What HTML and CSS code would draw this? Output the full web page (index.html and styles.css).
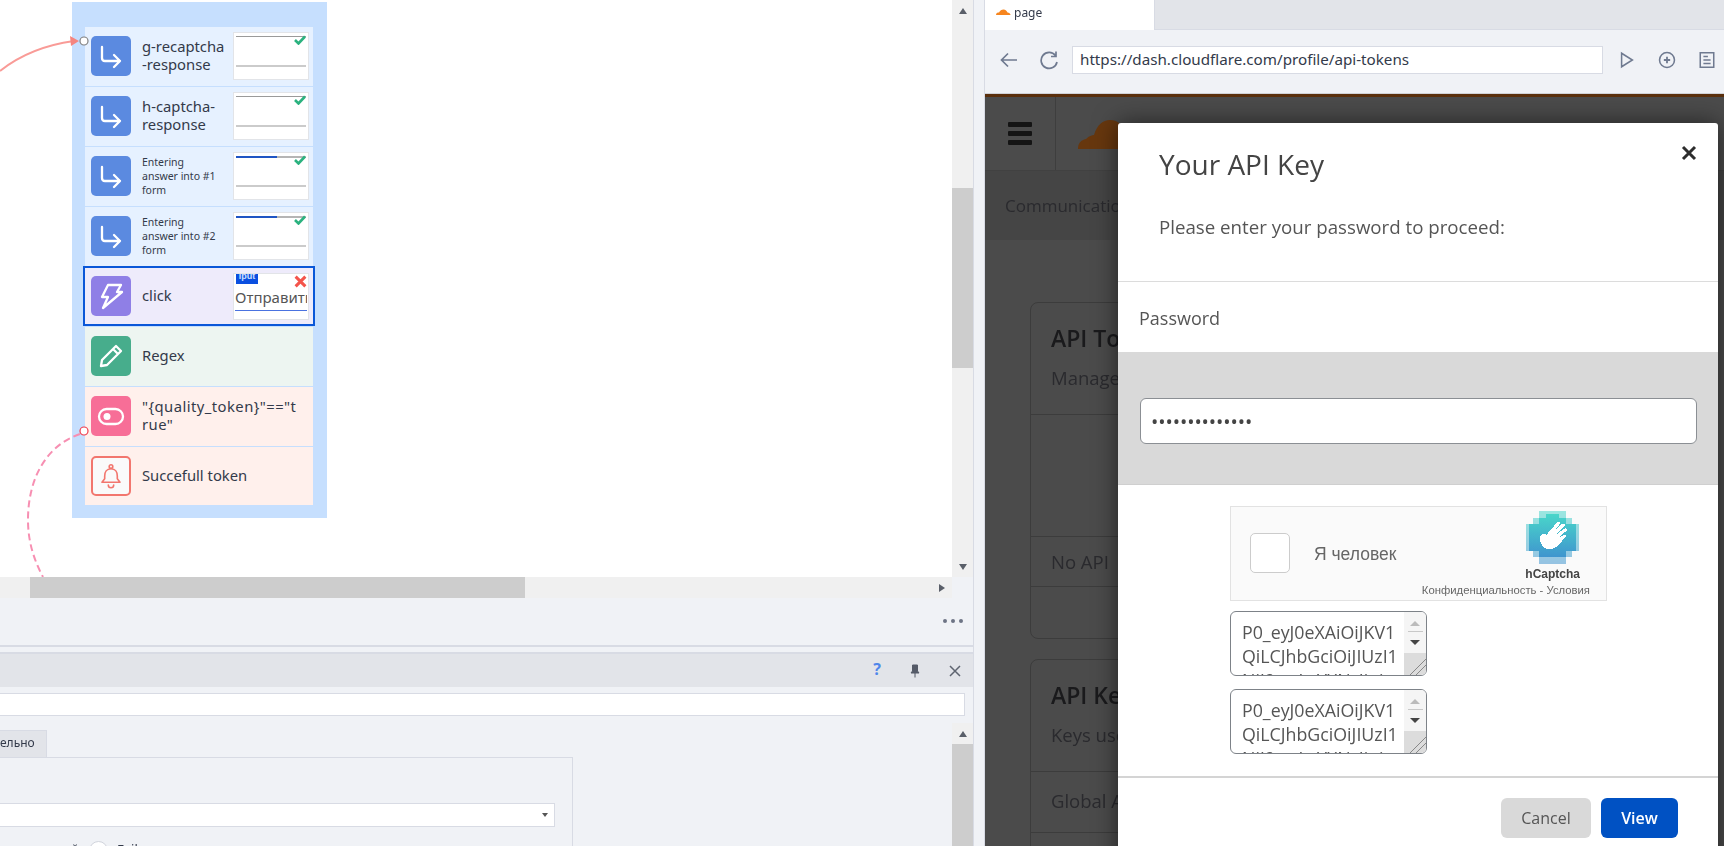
FILE: index.html
```html
<!DOCTYPE html>
<html lang="en">
<head>
<meta charset="utf-8">
<title>Workflow designer</title>
<link rel="stylesheet" href="styles.css">
</head>
<body>
<div class="app">
  <section class="left">
    <div class="designer">
      <div class="canvas-row">
        <div class="canvas">
          <svg class="wires" width="952" height="577" viewBox="0 0 952 577">
            <path class="wire" d="M0 71 C 20 55, 45 45, 74 41"/>
            <path class="wire-head" d="M70 36 L79 41 L71 46 Z"/>
            <path class="wire-dash" d="M80 434 C 45 446, 28 480, 28 520 C 28 542, 34 560, 43 577"/>
            <circle class="port" cx="84" cy="41" r="4"/>
            <circle class="port port-red" cx="84" cy="431" r="4"/>
          </svg>
          <div class="group">
            <div class="node node-blue">
              <span class="ico ico-blue"><svg viewBox="0 0 40 40"><path d="M11 11 V22 Q11 25 14 25 H29 M23 19 L29 25 L23 31"/></svg></span>
              <span class="label">g-recaptcha<br>-response</span>
              <span class="thumb"><i class="t-top"></i><i class="t-low"></i><svg class="t-mark" viewBox="0 0 12 10"><path d="M1 5 L4.5 8.5 L11 1.5"/></svg></span>
            </div>
            <div class="node node-blue">
              <span class="ico ico-blue"><svg viewBox="0 0 40 40"><path d="M11 11 V22 Q11 25 14 25 H29 M23 19 L29 25 L23 31"/></svg></span>
              <span class="label">h-captcha-<br>response</span>
              <span class="thumb"><i class="t-top"></i><i class="t-low"></i><svg class="t-mark" viewBox="0 0 12 10"><path d="M1 5 L4.5 8.5 L11 1.5"/></svg></span>
            </div>
            <div class="node node-blue">
              <span class="ico ico-blue"><svg viewBox="0 0 40 40"><path d="M11 11 V22 Q11 25 14 25 H29 M23 19 L29 25 L23 31"/></svg></span>
              <span class="label label-sm">Entering<br>answer into #1<br>form</span>
              <span class="thumb"><i class="t-top t-progress"></i><i class="t-low"></i><svg class="t-mark" viewBox="0 0 12 10"><path d="M1 5 L4.5 8.5 L11 1.5"/></svg></span>
            </div>
            <div class="node node-blue">
              <span class="ico ico-blue"><svg viewBox="0 0 40 40"><path d="M11 11 V22 Q11 25 14 25 H29 M23 19 L29 25 L23 31"/></svg></span>
              <span class="label label-sm">Entering<br>answer into #2<br>form</span>
              <span class="thumb"><i class="t-top t-progress"></i><i class="t-low"></i><svg class="t-mark" viewBox="0 0 12 10"><path d="M1 5 L4.5 8.5 L11 1.5"/></svg></span>
            </div>
            <div class="node node-purple node-selected">
              <span class="ico ico-purple"><svg viewBox="0 0 40 40"><path d="M17 9 H30 L26 16 H31 L12 32 L17 21 H11 Z"/></svg></span>
              <span class="label">click</span>
              <span class="thumb thumb-click"><b class="t-tag">iput</b><em class="t-btn">Отправить</em><svg class="t-x" viewBox="0 0 12 12"><path d="M1.5 1.5 L10.5 10.5 M10.5 1.5 L1.5 10.5"/></svg></span>
            </div>
            <div class="node node-green">
              <span class="ico ico-green"><svg viewBox="0 0 40 40"><path d="M10 30 L11 24 L25 10 L30 15 L16 29 Z M22 13 L27 18"/></svg></span>
              <span class="label">Regex</span>
            </div>
            <div class="node node-salmon">
              <span class="ico ico-pink"><svg viewBox="0 0 40 40"><rect x="8" y="13" width="24" height="15" rx="7.5"/><circle class="solid" cx="16" cy="20.5" r="3.5"/></svg></span>
              <span class="label label-wide">"{quality_token}"=="t<br>rue"</span>
            </div>
            <div class="node node-salmon node-last">
              <span class="ico ico-bell"><svg viewBox="0 0 40 40"><circle cx="20" cy="9.500" r="2"/><path d="M20 12 c-5 0 -7 4 -7 8 v3 l-3 4 h20 l-3 -4 v-3 c0 -4 -2 -8 -7 -8 z M17 30 a3 3 0 0 0 6 0"/></svg></span>
              <span class="label">Succefull token</span>
            </div>
          </div>
        </div>
        <div class="vscroll">
          <span class="arrow arrow-up"></span>
          <span class="vthumb vthumb-a"></span>
          <span class="vfill"></span>
          <span class="arrow arrow-down"></span>
        </div>
      </div>
      <div class="hscroll-row">
        <div class="hscroll"><span class="hthumb"></span><span class="vfill"></span><span class="arrow arrow-right"></span></div>
      </div>
      <div class="more"><i></i><i></i><i></i></div>
    </div>
    <div class="props">
      <div class="props-head">
        <span class="help">?</span>
        <svg class="pin" viewBox="0 0 12 14"><path d="M3.500 1 H8.500 V7 L10 9 H2 L3.500 7 Z M6 9 V13.500"/></svg>
        <svg class="close-sm" viewBox="0 0 12 12"><path d="M1 1 L11 11 M11 1 L1 11"/></svg>
      </div>
      <div class="props-search"><span class="field"></span></div>
      <div class="props-body">
        <div class="props-main">
          <div class="tab">ельно</div>
          <div class="box">
            <div class="select"><span class="caret"></span></div>
            <div class="radio-row"><span class="r-text">й</span><span class="radio"></span><span class="r-text">Fail</span></div>
          </div>
        </div>
        <div class="vscroll vscroll-low">
          <span class="arrow arrow-up"></span>
          <span class="vfill vfill-thumb"></span>
        </div>
      </div>
    </div>
  </section>
  <div class="splitter"></div>
  <section class="right">
    <div class="tabs">
      <div class="browser-tab">
        <svg class="cf-mini" viewBox="0 0 32 14"><path d="M2 13 C2 9 5 8 8 8 C10 4 13 2 17 2 C21 2 24 5 25 8 C28 8 31 10 31 13 Z"/></svg>
        <span>page</span>
      </div>
    </div>
    <div class="toolbar">
      <svg class="tool tool-back" viewBox="0 0 20 20"><path d="M18 10 H3 M9 3.500 L2.500 10 L9 16.500"/></svg>
      <svg class="tool tool-reload" viewBox="0 0 20 20"><path d="M16.500 5.500 A8 8 0 1 0 18 12 M17 1.500 V6.500 H12"/></svg>
      <div class="url">https://dash.cloudflare.com/profile/api-tokens</div>
      <svg class="tool tool-play" viewBox="0 0 20 20"><path d="M4 2.500 L16 10 L4 17.500 Z"/></svg>
      <svg class="tool tool-add" viewBox="0 0 20 20"><circle cx="10" cy="10" r="8.300"/><path class="thick" d="M6.500 10 H13.500 M10 6.500 V13.500"/></svg>
      <svg class="tool tool-doc" viewBox="0 0 20 20"><path d="M2.500 2 H17.500 V18 H2.500 Z M6 6 H11 M6 10 H14 M6 14 H14"/></svg>
    </div>
    <div class="page">
      <div class="page-head">
        <div class="burger"><i></i><i></i><i></i></div>
        <svg class="cf-logo" viewBox="0 0 46 30"><path d="M1 30 C1 24 4 21 9 20 C12 17 15 16 17 16 C20 6 26 1 33 1 C40 1 46 5 46 12 V30 Z"/></svg>
      </div>
      <div class="page-band">Communication</div>
      <div class="cards">
        <div class="card">
          <div class="card-head"><h2>API Tokens</h2><p>Manage</p></div>
          <div class="card-empty"></div>
          <div class="card-row">No API</div>
          <div class="card-foot"></div>
        </div>
        <div class="card">
          <div class="card-head"><h2>API Keys</h2><p>Keys used</p></div>
          <div class="card-row card-row-b">Global API Key</div>
          <div class="card-row"></div>
        </div>
      </div>
      <div class="modal">
        <div class="modal-head">
          <h1>Your API Key</h1>
          <p>Please enter your password to proceed:</p>
          <svg class="modal-x" viewBox="0 0 16 16"><path d="M2 2 L14 14 M14 2 L2 14"/></svg>
        </div>
        <div class="modal-label">Password</div>
        <div class="modal-band"><div class="pass">••••••••••••••</div></div>
        <div class="modal-body">
          <div class="hcap">
            <span class="hcheck"></span>
            <span class="hlabel">Я человек</span>
            <div class="hbrand">
              <svg class="hlogo" viewBox="0 0 8 8" shape-rendering="crispEdges">
                <defs><linearGradient id="hg" x1="0" y1="0" x2="0" y2="1"><stop offset="0" stop-color="#26cfc0"/><stop offset="1" stop-color="#1a7fc6"/></linearGradient></defs>
                <path fill="url(#hg)" opacity=".45" d="M2 0H6V1H7V2H8V6H7V7H6V8H2V7H1V6H0V2H1V1H2Z"/>
                <path fill="url(#hg)" opacity=".7" d="M3 0.5H5V1H6V2H7.500V6H6V7H2V6H0.500V2H2V1H3Z"/>
                <path fill="#fff" d="M2.100 4.300 C2 3.500 2.800 3.300 3.100 3.600 L4.700 1.700 C4.950 1.450 5.250 1.800 5.050 2.050 L4.100 3.250 L5.450 1.950 C5.700 1.750 6 2.050 5.800 2.300 L4.500 3.600 L5.800 2.650 C6.050 2.500 6.300 2.800 6.100 3 L4.800 4.100 L5.700 3.600 C5.950 3.500 6.100 3.800 5.900 4 C5.200 4.700 4.700 5.700 3.700 5.800 C2.900 5.900 2.200 5.200 2.100 4.300 Z"/>
              </svg>
              <strong>hCaptcha</strong>
              <small>Конфиденциальность - Условия</small>
            </div>
          </div>
          <div class="ta">
            <div class="ta-text">P0_eyJ0eXAiOiJKV1<br>QiLCJhbGciOiJIUzI1<br>NiJ9.eyJwYXNzIjoi</div>
            <div class="ta-bar"><span class="ta-btns"><i class="tri-up"></i><i class="tri-sep"></i><i class="tri-down"></i></span><span class="ta-track"></span></div>
          </div>
          <div class="ta">
            <div class="ta-text">P0_eyJ0eXAiOiJKV1<br>QiLCJhbGciOiJIUzI1<br>NiJ9.eyJwYXNzIjoi</div>
            <div class="ta-bar"><span class="ta-btns"><i class="tri-up"></i><i class="tri-sep"></i><i class="tri-down"></i></span><span class="ta-track"></span></div>
          </div>
        </div>
        <div class="modal-foot">
          <button class="btn btn-cancel">Cancel</button>
          <button class="btn btn-view">View</button>
        </div>
      </div>
    </div>
  </section>
</div>
</body>
</html>
```
FILE: styles.css
```css
* { box-sizing: border-box; }
html, body { margin: 0; height: 100%; overflow: hidden; }
body { font-family: "Noto Sans", sans-serif; color: #333a4a; background: #f0f2f6; }
.app { display: flex; width: 1724px; height: 846px; filter: blur(.35px); }

/* left column */
.left { width: 974px; flex: none; display: flex; flex-direction: column; border-right: 1px solid #d8dbe4; }
.designer { height: 647px; flex: none; display: flex; flex-direction: column; background: #f0f2f6; border-bottom: 2px solid #d8dbe4; }
.canvas-row { display: flex; height: 577px; flex: none; }
.canvas { position: relative; width: 952px; background: #fff; overflow: hidden; }
.wires { position: absolute; left: 0; top: 0; z-index: 2; pointer-events: none; }
.wire { fill: none; stroke: #f99b97; stroke-width: 2; }
.wire-head { fill: #f5857f; }
.wire-dash { fill: none; stroke: #f78fb2; stroke-width: 2; stroke-dasharray: 7 4; }
.port { fill: #fff; stroke: #808080; stroke-width: 1.200; }
.port-red { stroke: #f03a4a; }

.group { position: absolute; left: 72px; top: 2px; width: 255px; height: 516px; background: #c6dffe; padding: 25px 14px 13px 13px; }
.node { display: flex; align-items: flex-start; height: 60px; padding: 9px 4px 0 6px; border-bottom: 1px solid #c6dffe; }
.node-last { border-bottom: 0; height: 58px; }
.node-blue { background: #e6f1ff; }
.node-purple { background: #eeebfb; }
.node-green { background: #edf5f1; }
.node-salmon { background: #fff0ec; }
.node-selected { border: 2px solid #0a57d8; margin: -1px -2px 1px -2px; padding: 8px 4px 0 6px; position: relative; z-index: 1; }
.ico { width: 40px; height: 40px; flex: none; border-radius: 5px; display: block; }
.ico svg { display: block; width: 40px; height: 40px; fill: none; stroke: #fff; stroke-width: 2.300; stroke-linejoin: round; stroke-linecap: round; }
.ico .solid { fill: #fff; stroke: none; }
.ico-blue { background: #5b8ae0; }
.ico-purple { background: #8f7fe6; }
.ico-green { background: #47ad8c; }
.ico-pink { background: #f76e97; }
.ico-bell { background: #fafafa; border: 2px solid #f2766e; }
.ico-bell svg { width: 36px; height: 36px; stroke: #f2766e; stroke-width: 1.800; }
.label { margin-left: 11px; width: 90px; white-space: nowrap; font-size: 14.800px; line-height: 18px; height: 40px; padding-bottom: 2px; display: flex; align-items: center; }
.label-sm { font-size: 10.500px; line-height: 14px; padding-bottom: 0; }
.label-wide { letter-spacing: .45px; }
.thumb { position: relative; margin-left: auto; margin-top: -4px; width: 76px; height: 48px; background: #fff; border: 1px solid #e2e4e8; flex: none; overflow: hidden; }
.t-top { position: absolute; left: 2px; right: 2px; top: 3px; height: 1px; background: #9a9a9a; }
.t-progress { height: 1.500px; background: linear-gradient(90deg, #1f55c4 58%, #b5b5b5 58%); }
.t-low { position: absolute; left: 2px; right: 2px; top: 32px; height: 2px; background: #cbcbcb; }
.t-mark { position: absolute; right: 2px; top: 2px; width: 12px; height: 10px; fill: none; stroke: #2bb27f; stroke-width: 2.600; }
.thumb-click { margin-top: -3px; height: 47px; }
.t-tag { position: absolute; left: 2px; top: 0; width: 22px; height: 10px; background: #0a4fe0; color: #cfe0ff; font: 700 9px/4px "Liberation Sans", sans-serif; text-align: center; overflow: hidden; }
.t-btn { position: absolute; left: 1px; right: 1px; top: 12px; height: 25px; font: normal 15px/22px "Noto Sans", sans-serif; color: #555; border-bottom: 1.500px solid #4a72e0; overflow: hidden; white-space: nowrap; }
.t-x { position: absolute; right: 1px; top: 1px; width: 13px; height: 13px; fill: none; stroke: #f4544b; stroke-width: 2.800; }

.vscroll { width: 21px; flex: none; display: flex; flex-direction: column; background: #f0f0f0; }
.arrow { height: 21px; flex: none; display: flex; align-items: center; justify-content: center; }
.arrow::before { content: ""; border: 4.500px solid transparent; }
.arrow-up::before { border-bottom: 6px solid #5a5f69; border-top: 0; }
.arrow-down::before { border-top: 6px solid #5a5f69; border-bottom: 0; }
.arrow-right { width: 21px; height: 21px; }
.arrow-right::before { border-left: 6px solid #5a5f69; border-right: 0; }
.vthumb { background: #cdcdcd; flex: none; }
.vthumb-a { height: 180px; margin-top: 167px; }
.vfill { flex: 1; }
.hscroll-row { height: 21px; flex: none; width: 952px; }
.hscroll { display: flex; height: 21px; background: #f0f0f0; }
.hthumb { width: 495px; margin-left: 30px; background: #cdcdcd; }
.more { flex: 1; display: flex; justify-content: flex-end; align-items: center; gap: 4px; padding: 0 10px 2px 0; }
.more i { width: 4px; height: 4px; border-radius: 50%; background: #6d7485; }

.props { flex: 1; min-height: 0; display: flex; flex-direction: column; margin-top: 5px; border-top: 2px solid #d8dbe4; overflow: hidden; }
.props-head { height: 33px; flex: none; background: #e2e4e9; display: flex; align-items: center; justify-content: flex-end; padding-right: 12px; }
.help { color: #4f86ea; font: 700 16px/1 "Noto Sans", sans-serif; margin: -3px 28px 0 0; }
.pin { width: 12px; height: 14px; margin-right: 28px; fill: #555b68; stroke: #555b68; stroke-width: 1; }
.close-sm { width: 12px; height: 12px; fill: none; stroke: #5e6470; stroke-width: 1.500; }
.props-search { height: 36px; flex: none; padding: 6px 8px 7px 0; }
.field { display: block; height: 23px; background: #fff; border: 1px solid #d8dbe4; border-left: 0; }
.props-body { flex: 1; min-height: 0; display: flex; }
.props-main { flex: 1; padding-top: 7px; overflow: hidden; }
.tab { width: 47px; height: 27px; background: #e2e4e9; border: 1px solid #d8dbe4; border-left: 0; border-bottom: 0; font-size: 12px; line-height: 24px; padding-right: 14px; text-align: right; overflow: hidden; }
.box { width: 573px; height: 120px; border: 1px solid #d8dbe4; border-left: 0; padding-top: 45px; }
.select { position: relative; width: 555px; height: 24px; background: #fff; border: 1px solid #d8dbe4; border-left: 0; display: flex; align-items: center; justify-content: flex-end; padding-right: 6px; }
.caret { border: 3.500px solid transparent; border-top: 4px solid #555; border-bottom: 0; }
.radio-row { display: flex; align-items: flex-start; height: 30px; padding: 14px 0 0 71px; font-size: 13px; line-height: 18px; }
.r-text { line-height: 18px; margin-top: -1px; }
.radio { width: 19px; height: 19px; border: 1px solid #d0d3db; border-radius: 50%; background: #fff; margin: 0 9px 0 10px; }
.vscroll-low { background: transparent; }
.vscroll-low .arrow { background: #f0f0f0; }
.vfill-thumb { background: #cdcdcd; }
.splitter { width: 11px; flex: none; border-right: 1px solid #d8dbe4; background: #f0f2f6; }

/* browser */
.right { flex: 1; min-width: 0; display: flex; flex-direction: column; }
.tabs { height: 30px; flex: none; background: #e2e4e9; border-bottom: 1px solid #d8dbe4; }
.browser-tab { width: 170px; height: 30px; background: #fff; display: flex; align-items: center; gap: 3px; padding: 0 0 5px 10px; font-size: 12px; border-right: 1px solid #d8dbe4; }
.cf-mini { width: 16px; height: 8px; fill: #f6851f; margin-bottom: 2px; }
.toolbar { height: 64px; flex: none; display: flex; align-items: center; background: #f0f2f6; border-bottom: 1px solid #d0d2d8; padding: 0 0 4px 14px; }
.tool { width: 18px; height: 18px; flex: none; fill: none; stroke: #6f7a90; stroke-width: 1.700; }
.tool-back { width: 20px; height: 20px; }
.tool-reload { margin-left: 20px; width: 20px; height: 20px; }
.url { width: 531px; height: 28px; margin-left: 13px; background: #fff; border: 1.500px solid #d8dbe4; font-size: 15.200px; line-height: 25px; padding-left: 7px; color: #333a4a; white-space: nowrap; }
.tool-play { margin-left: 15px; }
.tool-add { margin-left: 22px; }
.tool-doc { margin-left: 22px; }
.tool-add .thick { stroke-width: 2; }

.page { position: relative; flex: 1; min-height: 0; overflow: hidden; background: #4b4b4b; border-top: 3px solid #5a2f0c; color: #2a2a2e; font-family: "Open Sans", sans-serif; }
.page-head { height: 74px; display: flex; align-items: center; border-bottom: 1px solid #414141; }
.burger { width: 71px; height: 100%; border-right: 1px solid #3e3e3e; display: flex; flex-direction: column; justify-content: center; align-items: center; gap: 4px; flex: none; }
.burger i { width: 24px; height: 5px; background: #141414; border-radius: 1px; }
.cf-logo { width: 46px; height: 30px; margin: 0 0 0 21px; fill: #67370e; }
.page-band { height: 69px; background: #454545; padding: 0 0 0 20px; font-size: 17px; line-height: 69px; }
.cards { padding: 62px 0 0 45px; }
.card { width: 640px; border: 1px solid #3c3c3c; border-radius: 8px; margin-bottom: 20px; }
.card-head { padding: 20px 20px 0; height: 112px; border-bottom: 1px solid #3c3c3c; }
.card-head h2 { margin: 0; font-size: 23px; line-height: 30px; font-weight: 600; color: #1a1a1c; }
.card-head p { margin: 12px 0 0; font-size: 18.500px; line-height: 26px; }
.card-empty { height: 122px; border-bottom: 1px solid #3c3c3c; }
.card-row { height: 50px; padding: 0 20px; font-size: 18.500px; line-height: 50px; border-bottom: 1px solid #3c3c3c; }
.card-row-b { height: 61px; line-height: 58px; }
.card-foot { height: 51px; }

/* modal */
.modal { position: absolute; left: 133px; top: 26px; width: 600px; height: 760px; background: #fff; border-radius: 3px 3px 0 0; box-shadow: 0 0 24px rgba(0,0,0,.55); display: flex; flex-direction: column; color: #555; }
.modal-head { position: relative; height: 159px; padding: 21px 40px 0 41px; border-bottom: 1px solid #dcdcdc; flex: none; }
.modal-head h1 { margin: 0; font-size: 28px; line-height: 40px; font-weight: 400; color: #444; }
.modal-head p { margin: 31px 0 0; font-size: 18.700px; line-height: 24px; white-space: nowrap; }
.modal-x { position: absolute; right: 21px; top: 22px; width: 16px; height: 16px; fill: none; stroke: #2d2d2d; stroke-width: 3; }
.modal-label { height: 70px; flex: none; padding-left: 21px; font-size: 18px; line-height: 72px; }
.modal-band { height: 133px; flex: none; background: #d9d9d9; border-bottom: 1px solid #cfcfcf; padding: 46px 21px 0 22px; }
.pass { height: 46px; background: #fff; border: 1px solid #8b8f94; border-radius: 6px; padding-left: 10px; font-size: 19.500px; line-height: 46px; letter-spacing: -.1px; color: #444; }
.modal-body { height: 293px; flex: none; border-bottom: 2px solid #d4d4d4; padding: 21px 0 0 112px; }
.hcap { width: 377px; height: 95px; display: flex; background: #fafafa; border: 1px solid #e2e2e2; margin-bottom: 10px; font-family: "Liberation Sans", sans-serif; }
.hcheck { width: 40px; height: 40px; margin: 26px 0 0 19px; background: #fff; border: 1px solid #ccc; border-radius: 5px; flex: none; }
.hlabel { margin: 36px 0 0 24px; font-size: 17.500px; line-height: 22px; color: #666; flex: none; width: 100px; white-space: nowrap; }
.hbrand { flex: 1; min-width: 0; display: flex; flex-direction: column; align-items: flex-end; padding-top: 4px; }
.hlogo { width: 53px; height: 53px; flex: none; margin-right: 27px; }
.hbrand strong { font-size: 12px; line-height: 14px; margin: 3px 26px 0 0; color: #444; }
.hbrand small { font-size: 11.300px; line-height: 12px; margin: 3px 16px 0 -60px; color: #666; white-space: nowrap; }
.ta { width: 197px; height: 65px; display: flex; border: 1px solid #7d8288; border-top-width: 1.500px; border-radius: 6px; background: #fff; overflow: hidden; margin-bottom: 13px; }
.ta-text { flex: 1; padding: 8px 0 0 11px; font-size: 17.800px; line-height: 24px; color: #555; white-space: nowrap; overflow: hidden; }
.ta-bar { width: 22px; flex: none; display: flex; flex-direction: column; background: #f5f5f5; }
.ta-btns { flex: none; height: 41px; display: flex; flex-direction: column; align-items: center; padding-top: 9px; gap: 5px; }
.tri-up { border: 5px solid transparent; border-bottom: 5px solid #bbb; border-top: 0; }
.tri-sep { width: 15px; height: 1px; background: #c8c8c8; }
.tri-down { border: 5px solid transparent; border-top: 5px solid #444; border-bottom: 0; margin-top: 3px; }
.ta-track { flex: 1; background: linear-gradient(135deg, #dcdcdc 62%, #888 62%, #888 65%, #dcdcdc 65%, #dcdcdc 76%, #888 76%, #888 79%, #dcdcdc 79%); }
.modal-foot { flex: 1; display: flex; justify-content: flex-end; gap: 10px; padding: 20px 40px 0 0; align-items: flex-start; }
.btn { height: 40px; border: 0; border-radius: 6px; font: 400 16px/40px "Open Sans", sans-serif; padding: 0; }
.btn-cancel { width: 90px; background: #d9d9d9; color: #555; }
.btn-view { width: 77px; background: #0051c3; color: #fff; font-weight: 600; }
```
